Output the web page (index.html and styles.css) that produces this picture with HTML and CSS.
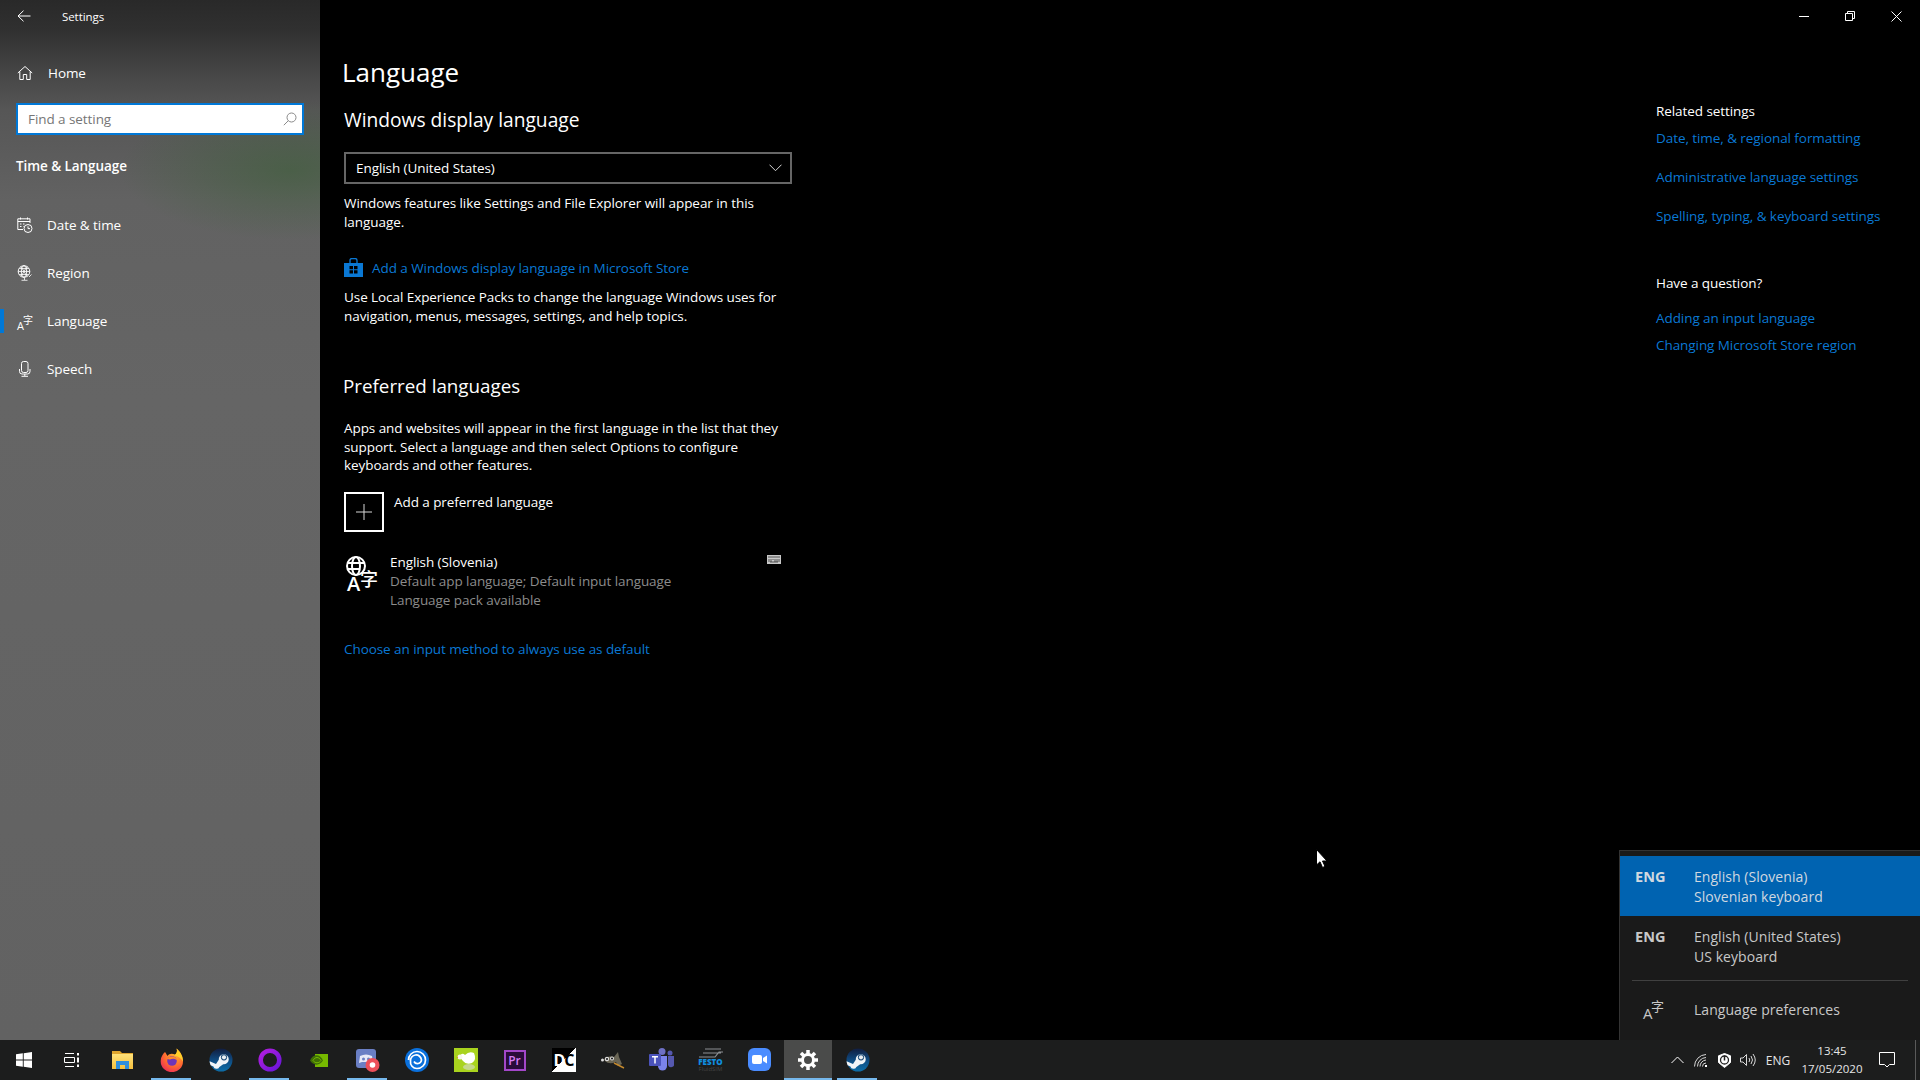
FILE: index.html
```html
<!DOCTYPE html>
<html lang="en">
<head>
<meta charset="utf-8">
<title>Settings</title>
<link rel="stylesheet" href="styles.css">
</head>
<body>
<svg class="defs" width="0" height="0" aria-hidden="true">
  <defs>
    <radialGradient id="ffg" cx="65%" cy="25%" r="90%"><stop offset="0" stop-color="#ffb52e"/><stop offset=".55" stop-color="#ff6a30"/><stop offset="1" stop-color="#e8205f"/></radialGradient>
    <linearGradient id="steamg" x1="0" y1="0" x2="0" y2="1"><stop offset="0" stop-color="#111d3f"/><stop offset=".5" stop-color="#0f4a80"/><stop offset="1" stop-color="#0d6ea8"/></linearGradient>
    <linearGradient id="ringg" x1="0" y1="0" x2="1" y2="1"><stop offset="0" stop-color="#b11ee0"/><stop offset="1" stop-color="#6a16d8"/></linearGradient>
    <linearGradient id="folderg" x1="0" y1="0" x2="0" y2="1"><stop offset="0" stop-color="#ffe27a"/><stop offset="1" stop-color="#f5bf3d"/></linearGradient>
    <symbol id="steam" viewBox="0 0 24 24">
      <circle cx="12" cy="12" r="11.5" fill="url(#steamg)"/>
      <path d="M.6 13.2 7 15.900 9.800 11.800a5 5 0 1 1 4.400 4.400L10.400 19a3.200 3.200 0 0 1-6-.5L1.600 17.300A11.500 11.500 0 0 1 .6 13.200Z" fill="#f1f4f7"/>
      <circle cx="15" cy="9.300" r="3.100" fill="#1b4a77"/><circle cx="15" cy="9.300" r="2.100" fill="#e8edf2"/>
    </symbol>
  </defs>
</svg>
<div class="screen">
  <div class="window">
    <aside class="sidebar">
      <div class="titlebar">
        <svg class="back" width="14" height="12" viewBox="0 0 14 12"><path d="M6.500.7 1 6l5.500 5.300M1 6h12.500" class="line"/></svg>
        <span class="app-title">Settings</span>
      </div>
      <div class="nav-row home">
        <svg class="nav-icon" width="16" height="16" viewBox="0 0 16 16"><path d="M.8 8 8 1.500 15.200 8M2.800 6.500V14.500H6.300V9.500H9.700V14.500H13.200V6.500" class="line"/></svg>
        <span>Home</span>
      </div>
      <div class="search">
        <span>Find a setting</span>
        <svg width="14" height="14" viewBox="0 0 14 14"><circle cx="8.500" cy="5.500" r="4.500" class="line-grey"/><path d="M5.300 8.700.8 13.200" class="line-grey"/></svg>
      </div>
      <div class="section-title">Time &amp; Language</div>
      <nav class="nav">
        <div class="nav-row">
          <svg class="nav-icon" width="16" height="16" viewBox="0 0 16 16"><path d="M6 12.500H.8V1.800H13V6M.8 4.500H13M3.500.5V2.500M10.500.5V2.500M3 7H4.500M6 7H7.500M3 9.500H4.500M6 9.500H6.500" class="line"/><circle cx="11" cy="11.500" r="4" class="line"/><path d="M11 9.300V11.600H13" class="line"/></svg>
          <span>Date &amp; time</span>
        </div>
        <div class="nav-row">
          <svg class="nav-icon" width="16" height="16" viewBox="0 0 16 16"><circle cx="7" cy="6.500" r="5.800" class="line"/><ellipse cx="7" cy="6.500" rx="2.700" ry="5.800" class="line"/><path d="M1.200 6.500H12.800M2.200 3.500H11.800M2.200 9.500H11.800M4 1.500 10 11.500M10 1.500 4 11.500M12 12 14.500 9.500M7.500 13V15M4.500 15.300H10.500" class="line-thin"/></svg>
          <span>Region</span>
        </div>
        <div class="nav-row active">
          <svg class="nav-icon wide" width="24" height="28" viewBox="-4 -8 24 28"><text x="0" y="15" class="lg-a">A</text><text x="6" y="9" class="lg-z">字</text></svg>
          <span>Language</span>
        </div>
        <div class="nav-row">
          <svg class="nav-icon" width="16" height="16" viewBox="0 0 16 16"><rect x="4.500" y=".5" width="6.500" height="11" rx="2" class="line"/><path d="M2.500 8V10.500A2.500 2.500 0 0 0 5 13H10.500A2.500 2.500 0 0 0 13 10.500V8M7.800 13V15M4.500 15.300H11" class="line"/></svg>
          <span>Speech</span>
        </div>
      </nav>
    </aside>
    <main class="main">
      <div class="caption-controls">
        <svg width="10" height="10" viewBox="0 0 10 10"><path d="M0 5.500H10" class="line"/></svg>
        <svg width="10" height="10" viewBox="0 0 10 10"><path d="M.5 2.500H7.500V9.500H.5ZM2.500 2.500V.5H9.500V7.500H7.500" class="line"/></svg>
        <svg width="11" height="11" viewBox="0 0 11 11"><path d="M.5.5 10.500 10.500M10.500.5.5 10.500" class="line"/></svg>
      </div>
      <div class="content">
        <section class="primary">
          <h1>Language</h1>
          <h2 class="h-display">Windows display language</h2>
          <div class="dropdown">
            <span>English (United States)</span>
            <svg width="13" height="8" viewBox="0 0 13 8"><path d="M.5.7 6.500 6.700 12.500.7" class="line-soft"/></svg>
          </div>
          <p class="para p-a">Windows features like Settings and File Explorer will appear in this<br>language.</p>
          <div class="store-link">
            <svg width="19" height="20" viewBox="0 0 19 20"><path d="M0 5H19V19H0Z" fill="#0a78d4"/><path d="M6 6V2.500Q6 .5 8 .5H11Q13 .5 13 2.500V6" fill="none" stroke="#0a78d4" stroke-width="1.300"/><path d="M5.500 8H9V11.300H5.500ZM10 8H13.500V11.300H10ZM5.500 12.300H9V15.600H5.500ZM10 12.300H13.500V15.600H10Z" fill="#000"/></svg>
            <a>Add a Windows display language in Microsoft Store</a>
          </div>
          <p class="para p-b">Use Local Experience Packs to change the language Windows uses for<br>navigation, menus, messages, settings, and help topics.</p>
          <h2 class="h-pref">Preferred languages</h2>
          <p class="para p-c">Apps and websites will appear in the first language in the list that they<br>support. Select a language and then select Options to configure<br>keyboards and other features.</p>
          <div class="add-row">
            <div class="add-box"><svg width="16" height="16" viewBox="0 0 16 16"><path d="M8 0V16M0 8H16" class="line-soft"/></svg></div>
            <span>Add a preferred language</span>
          </div>
          <div class="lang-row">
            <svg class="lang-icon" width="44" height="54" viewBox="-5 -8 44 54">
              <circle cx="11" cy="10" r="9" class="globe"/><ellipse cx="11" cy="10" rx="4" ry="9" class="globe"/><path d="M2 7H20M2 13H14" class="globe"/>
              <text x="2" y="35" class="big-a">A</text><text x="15" y="30" class="big-z">字</text>
            </svg>
            <div class="lang-text">
              <div class="lang-name">English (Slovenia)</div>
              <div class="lang-sub">Default app language; Default input language</div>
              <div class="lang-sub">Language pack available</div>
            </div>
            <svg class="kbd" width="14" height="9" viewBox="0 0 14 9"><rect width="14" height="9" fill="#c8c8c8"/><path d="M1 2H13M2 4V7M4 4V7M6 4V5M8 4V7M10 4V7M12 4V7M3 7H11" stroke="#333" stroke-width=".8"/></svg>
          </div>
          <a class="default-link">Choose an input method to always use as default</a>
        </section>
        <section class="related">
          <div class="rel-title">Related settings</div>
          <a class="rel-link l1">Date, time, &amp; regional formatting</a>
          <a class="rel-link l2">Administrative language settings</a>
          <a class="rel-link l2">Spelling, typing, &amp; keyboard settings</a>
          <div class="rel-title q">Have a question?</div>
          <a class="rel-link l3">Adding an input language</a>
          <a class="rel-link l4">Changing Microsoft Store region</a>
        </section>
      </div>
    </main>
  </div>
  <footer class="taskbar">
    <div class="task-item first">
      <svg width="16" height="16" viewBox="0 0 16 16"><path d="M0 2.300 6.800 1.300V7.500H0ZM7.700 1.200 16 0V7.500H7.700ZM0 8.400H6.800V14.700L0 13.700ZM7.700 8.400H16V16L7.700 14.800Z" fill="#fff"/></svg>
    </div>
    <div class="task-item second">
      <svg width="16" height="14" viewBox="0 0 16 14"><path d="M1 .5H10M1 13.500H10M.5 4.500H10.500V9.500H.5Z" class="line"/><path d="M14 0V2.500M14 4.500V9.500M14 11.500V14" stroke="#fff" stroke-width="2" fill="none"/></svg>
    </div>
    <div class="task-item">
      <svg width="22" height="20" viewBox="0 0 22 20"><path d="M0 1H8L10 3H21V8H0Z" fill="#dfa52e"/><path d="M0 4H21V19H0Z" fill="url(#folderg)"/><path d="M4 19V11H17V19H13V15H8V19Z" fill="#2f8fdc"/></svg>
    </div>
    <div class="task-item running">
      <svg width="24" height="24" viewBox="0 0 24 24"><path d="M5 4C3 6 .5 9 .7 13.500A11 10.500 0 0 0 23 13.500C23 9 21 4 16.500 .5 17.500 3 17 5 15 6.500 12 5 9 5.500 7.500 8 7 7 6 5.500 5 4Z" fill="url(#ffg)"/><path d="M16.500.5C21 4 23 9 23 13.500 21 10 18 8 14.500 7.500 17 5.500 17.500 3 16.500.5Z" fill="#ffcf2a"/><circle cx="12" cy="13" r="4.800" fill="#6f35b8"/><path d="M7 10.500C10 7.500 16 7.500 17.500 12.500 15 10.500 12 10.500 10 11.500 9 11.500 8 11 7 10.500Z" fill="#ff8a2a"/></svg>
    </div>
    <div class="task-item"><svg width="24" height="24"><use href="#steam"/></svg></div>
    <div class="task-item running">
      <svg width="24" height="24" viewBox="0 0 24 24"><circle cx="12" cy="12" r="9.300" fill="none" stroke="url(#ringg)" stroke-width="4.500"/></svg>
    </div>
    <div class="task-item">
      <svg width="18" height="13" viewBox="0 0 18 13"><rect x="5" width="13" height="13" fill="#76b900"/><path d="M0 6.500C3-.5 10-.5 13 6.500 10 12 3 12 0 6.500Z" fill="#3f6f06"/><path d="M3 6.500C5 2.500 9 2.500 11 6.500 9 9.500 5 9.500 3 6.500Z" fill="none" stroke="#76b900"/></svg>
    </div>
    <div class="task-item running">
      <svg width="24" height="24" viewBox="0 0 24 24"><rect y="1" width="20" height="19" rx="3" fill="#6a7fc4"/><path d="M4 8Q10 5 16 8L17 15 14 14H6L3 15Z" fill="#e6e9f6"/><circle cx="7.500" cy="11" r="1.500" fill="#6a7fc4"/><circle cx="12.500" cy="11" r="1.500" fill="#6a7fc4"/><circle cx="16.500" cy="17" r="7" fill="#ec4f59"/><circle cx="16.500" cy="17" r="2.800" fill="#fff"/></svg>
    </div>
    <div class="task-item">
      <svg width="24" height="24" viewBox="0 0 24 24"><circle cx="12" cy="12" r="12" fill="#0a70dc"/><path d="M3.500 12A8.500 8.500 0 0 1 20.500 12 8.500 8.500 0 0 1 12 20.500 6.500 6.500 0 0 1 5.500 13 5.500 5.500 0 0 1 16.500 12 4 4 0 0 1 9 13.500" fill="none" stroke="#fff" stroke-width="1.700"/></svg>
    </div>
    <div class="task-item">
      <svg width="24" height="24" viewBox="0 0 24 24"><rect width="24" height="24" fill="#a9d31e"/><path d="M6 8Q8 4 11 7 15 3 20 5 23 12 18 15 12 17 9 13 7 11 6 8Z" fill="#fff"/><circle cx="6" cy="9" r="2.500" fill="#f7f7ea"/><path d="M2.500 9.500 4 8.500V10Z" fill="#e8792a"/><ellipse cx="15" cy="19" rx="6" ry="3" fill="#c6d88c"/></svg>
    </div>
    <div class="task-item">
      <div class="pr-tile">Pr</div>
    </div>
    <div class="task-item">
      <div class="dc-tile"><span class="dc-d">D</span><span class="dc-c">C</span></div>
    </div>
    <div class="task-item">
      <svg width="24" height="18" viewBox="0 0 24 18"><path d="M3 8Q8 4 13 6L17 1 18 6 21 13 17 15 15 11Q8 14 4 10Z" fill="#6a6656"/><circle cx="1.500" cy="9" r="1.500" fill="#ddd"/><circle cx="6" cy="8" r="2.200" fill="#ddd"/><circle cx="6" cy="8" r="1" fill="#111"/><circle cx="11" cy="7.500" r="2" fill="#ddd"/><circle cx="11" cy="7.500" r="1" fill="#111"/><path d="M13 12 23 17" stroke="#c58a2d" stroke-width="1.500"/></svg>
    </div>
    <div class="task-item">
      <svg width="25" height="24" viewBox="0 0 25 24"><circle cx="13" cy="3.500" r="3.500" fill="#6e70c4"/><circle cx="21" cy="5" r="2.500" fill="#5558af"/><path d="M9 8H18V18A4.500 4.500 0 0 1 9 18Z" fill="#7b83eb"/><path d="M19 8H25V15A3 3 0 0 1 19 17Z" fill="#5558af"/><rect y="6" width="12" height="12" rx="1" fill="#4b53bc"/><path d="M3 8.800H9M6 8.800V15.500" stroke="#fff" stroke-width="1.500"/></svg>
    </div>
    <div class="task-item">
      <div class="festo">
        <svg width="24" height="10" viewBox="0 0 24 10"><path d="M0 9H16L20 4H24M6 1H22M4 5H22" fill="none" stroke="#8b8f94" stroke-width="1.200"/></svg>
        <span class="festo-name">FESTO</span>
        <span class="festo-sub">FluidSIM</span>
      </div>
    </div>
    <div class="task-item">
      <svg width="24" height="24" viewBox="0 0 24 24"><rect width="23" height="23" rx="6" fill="#4a8cff"/><rect x="4" y="7" width="10" height="9" rx="2" fill="#fff"/><path d="M15 10 19 7.500V15.500L15 13Z" fill="#fff"/></svg>
    </div>
    <div class="task-item current running">
      <svg width="20" height="20" viewBox="0 0 20 20"><circle cx="10" cy="10" r="5.500" fill="none" stroke="#fff" stroke-width="3"/><path d="M10 0V4M10 16V20M0 10H4M16 10H20M3 3 5.800 5.800M14.200 14.200 17 17M17 3 14.200 5.800M5.800 14.200 3 17" stroke="#fff" stroke-width="3.500"/></svg>
    </div>
    <div class="task-item running"><svg width="24" height="24"><use href="#steam"/></svg></div>
    <div class="tray">
      <div class="tray-item w24"><svg width="13" height="8" viewBox="0 0 13 8"><path d="M.5 7 6.500 1 12.500 7" class="line"/></svg></div>
      <div class="tray-item w24"><svg width="14" height="13" viewBox="0 0 14 13"><path d="M.5 12.500A12 12 0 0 1 12 .5M3.500 12.500A9 9 0 0 1 12 3.500M6 12.500A6.500 6.500 0 0 1 12 6M8.500 12.500A3.500 3.500 0 0 1 12 9" class="line-soft"/><rect x="11" y="11" width="2" height="2" fill="#fff"/></svg></div>
      <div class="tray-item w23"><svg width="15" height="15" viewBox="0 0 15 15"><path d="M7.500.5 13.500 2.800V9.500L7.500 14.500 1.500 9.500V2.800Z" fill="#fff" stroke="#fff" stroke-linejoin="round"/><circle cx="7.500" cy="7" r="4" fill="none" stroke="#222" stroke-width="1.300"/><path d="M7.500 2.500V7.500" stroke="#222" stroke-width="1.500"/></svg></div>
      <div class="tray-item w23"><svg width="16" height="14" viewBox="0 0 16 14"><path d="M.5 5H3L6.500 1.500V12.500L3 9H.5ZM9 5Q10.500 7 9 9M11 3Q14 7 11 11M13 1Q17.500 7 13 13" class="line-soft"/></svg></div>
      <div class="tray-lang">ENG</div>
      <div class="clock"><span>13:45</span><span>17/05/2020</span></div>
      <div class="notif"><svg width="16" height="16" viewBox="0 0 16 16"><path d="M.5.5H15.500V12.500H10.500L8 15 5.500 12.500H.5Z" class="line"/></svg></div>
      <div class="show-desktop"></div>
    </div>
  </footer>
  <div class="flyout">
    <div class="fly-row selected"><span class="fly-code">ENG</span><span class="fly-text">English (Slovenia)<br>Slovenian keyboard</span></div>
    <div class="fly-row"><span class="fly-code">ENG</span><span class="fly-text">English (United States)<br>US keyboard</span></div>
    <div class="fly-sep"></div>
    <div class="fly-pref">
      <svg class="fly-icon" width="34" height="40" viewBox="-5 -8 34 40"><text x="0" y="22" class="fl-a">A</text><text x="8" y="14" class="fl-z">字</text></svg>
      <span class="fly-text">Language preferences</span>
    </div>
  </div>
  <svg class="cursor" width="12" height="20" viewBox="0 0 12 20"><path d="M.5.5V16L4 12.800 6.500 18.500 9 17.400 6.500 12H11Z" fill="#fff" stroke="#000"/></svg>
</div>
</body>
</html>
```

FILE: styles.css
```css
* { box-sizing: border-box; }
html, body { margin: 0; padding: 0; height: 100%; background: #000; overflow: hidden; }
body { font-family: "Open Sans", "Noto Sans", "Noto Sans CJK SC", sans-serif; font-size: 13.500px; letter-spacing: -.07px; color: #fff; }
.defs { display: block; }
.screen { position: relative; width: 1920px; height: 1080px; display: flex; flex-direction: column; }
.window { flex: 1; display: flex; min-height: 0; }
.line { fill: none; stroke: #fff; stroke-width: 1; }
.line-thin { fill: none; stroke: #fff; stroke-width: .8; }
.line-soft { fill: none; stroke: #d8d8d8; stroke-width: 1; }
.line-grey { fill: none; stroke: #8a8a8a; stroke-width: 1; }
a { color: #0a78d4; }

.sidebar {
  width: 320px;
  flex: none;
  background:
    radial-gradient(ellipse 170px 70px at 290px 170px, rgba(62, 96, 58, .6), rgba(62, 96, 58, 0)),
    linear-gradient(180deg, #292929 0, #303030 30px, #474747 75px, #565656 110px, #626262 200px, #656565 400px, #626262 100%);
}
.titlebar { height: 32px; display: flex; align-items: center; padding-left: 17px; }
.back { flex: none; }
.app-title { margin-left: 31px; font-size: 11.500px; }
.nav-row { height: 48px; display: flex; align-items: center; padding-left: 17px; position: relative; }
.nav-row span { margin-left: 14px; }
.nav-icon { flex: none; }
.nav-icon.wide { margin: 0 -4px; }
.home { margin-top: 17px; padding-left: 17px; }
.home span { margin-left: 15px; }
.search {
  margin: 6px 16px 0;
  height: 32px;
  border: 2px solid #0078d7;
  background: #fff;
  display: flex;
  align-items: center;
  justify-content: space-between;
  padding: 0 5px 0 10px;
  color: #767676;
}
.section-title { margin: 21px 0 0 16px; height: 20px; line-height: 20px; font-weight: 600; }
.nav { margin-top: 25px; }
.active::before { content: ""; position: absolute; left: 0; top: 12px; width: 4px; height: 24px; background: #0078d7; }
.lg-a { font-size: 11px; fill: #fff; font-family: "Open Sans", sans-serif; }
.lg-z { font-size: 10px; fill: #fff; font-family: "Noto Sans CJK SC", sans-serif; }

.main { flex: 1; min-width: 0; position: relative; background: #000; }
.caption-controls { display: flex; justify-content: flex-end; align-items: center; gap: 36px; height: 32px; padding-right: 18px; }
.content { display: flex; justify-content: space-between; }
.primary { width: 500px; padding-left: 24px; display: flex; flex-direction: column; align-items: flex-start; }
h1 { margin: 20px 0 0 -2px; font-size: 26px; line-height: 40px; font-weight: 400; letter-spacing: 0; }
h2 { margin: 0; font-size: 19px; line-height: 26px; font-weight: 400; letter-spacing: 0; }
.h-display { margin-top: 15px; font-size: 19.200px; }
.dropdown {
  margin-top: 19px;
  width: 448px;
  height: 32px;
  border: 2px solid #666;
  display: flex;
  align-items: center;
  justify-content: space-between;
  padding: 0 8px 0 10px;
}
.para { margin: 0; line-height: 18.500px; }
.p-a { margin-top: 10px; }
.store-link { margin-top: 27px; display: flex; align-items: center; gap: 9px; height: 20px; }
.p-b { margin-top: 10px; }
.h-pref { margin: 48px 0 0 -1px; font-size: 18.800px; }
.p-c { margin-top: 20px; }
.add-row { margin-top: 17px; display: flex; align-items: flex-start; }
.add-box { width: 40px; height: 40px; border: 2px solid #fff; display: flex; align-items: center; justify-content: center; }
.add-row span { margin: 0 0 0 10px; line-height: 20px; }
.lang-row { margin-top: 21px; width: 448px; display: flex; position: relative; }
.lang-icon { flex: none; margin: -5px -5px -13px -4px; }
.globe { fill: none; stroke: #fff; stroke-width: 2; }
.big-a { font-size: 20px; font-weight: 600; fill: #fff; font-family: "Open Sans", sans-serif; }
.big-z { font-size: 18px; font-weight: 500; fill: #fff; font-family: "Noto Sans CJK SC", sans-serif; }
.lang-text { margin-left: 11px; line-height: 19px; }
.lang-sub { color: #8c8c8c; }
.kbd { position: absolute; right: 11px; top: 2px; }
.default-link { margin-top: 29px; line-height: 20px; }

.related { width: 264px; flex: none; padding-top: 69px; }
.rel-title { line-height: 20px; }
.rel-link { display: block; line-height: 20px; }
.l1 { margin-top: 7px; }
.l2 { margin-top: 19px; }
.q { margin-top: 47px; }
.l3 { margin-top: 15px; }
.l4 { margin-top: 7px; }

.taskbar { height: 40px; flex: none; background: #1c1d1d; display: flex; letter-spacing: 0; }
.task-item { width: 49px; flex: none; height: 40px; display: flex; align-items: center; justify-content: center; position: relative; }
.task-item.first { width: 48px; }
.task-item.second { width: 50px; padding-right: 2px; }
.running::after { content: ""; position: absolute; left: 4px; right: 5px; bottom: 0; height: 2px; background: #76b9ed; }
.current { background: #4a4b4a; background-clip: content-box; padding-right: 1px; }
.current::after { left: 0; right: 1px; }
.pr-tile { width: 22px; height: 21px; background: #2a0b3a; border: 2px solid #a347c9; color: #d67cf5; font-size: 12px; line-height: 17px; text-align: center; font-weight: 600; }
.dc-tile { width: 24px; height: 24px; background: linear-gradient(to bottom right, #000 50%, #fff 50%); font-size: 16px; line-height: 24px; font-weight: 700; text-align: center; letter-spacing: -1px; }
.dc-d { color: #fff; }
.dc-c { color: #000; }
.festo { display: flex; flex-direction: column; align-items: center; width: 26px; line-height: 1; }
.festo-name { color: #0f8fe0; font-size: 8px; font-weight: 800; }
.festo-sub { color: #444; font-size: 6px; }

.tray { margin-left: auto; width: 255px; display: flex; align-items: center; height: 40px; font-size: 12px; color: #e6e6e6; }
.tray-item { height: 40px; display: flex; align-items: center; justify-content: center; flex: none; }
.w24 { width: 24px; }
.w23 { width: 23px; }
.tray-lang { width: 38px; text-align: center; flex: none; }
.clock { width: 70px; flex: none; display: flex; flex-direction: column; align-items: center; line-height: 18px; font-size: 11.500px; }
.notif { width: 40px; flex: none; display: flex; justify-content: center; }
.show-desktop { margin-left: 8px; width: 5px; height: 40px; border-left: 1px solid #5a5a5a; flex: none; }

.flyout { position: absolute; left: 1619px; top: 850px; width: 301px; height: 190px; background: #1a1a1a; border: solid #333; border-width: 1px 0 0 1px; padding-top: 5px; color: #c8c8c8; font-size: 14px; letter-spacing: .05px; }
.fly-row { height: 60px; display: flex; align-items: flex-start; padding: 11px 0 0 15px; line-height: 20px; }
.fly-row.selected { background: #0063b1; color: #d0d8e0; }
.fly-code { width: 59px; font-weight: 700; font-size: 14.500px; flex: none; }
.fly-sep { height: 1px; margin: 4px 12px 0; background: #404040; }
.fly-pref { height: 56px; display: flex; align-items: center; padding-left: 18px; }
.fly-icon { flex: none; margin-right: 22px; }
.fl-a { font-size: 15px; fill: #c8c8c8; font-family: "Open Sans", sans-serif; }
.fl-z { font-size: 13px; fill: #c8c8c8; font-family: "Noto Sans CJK SC", sans-serif; }
.cursor { position: absolute; left: 1316px; top: 849px; }
```
